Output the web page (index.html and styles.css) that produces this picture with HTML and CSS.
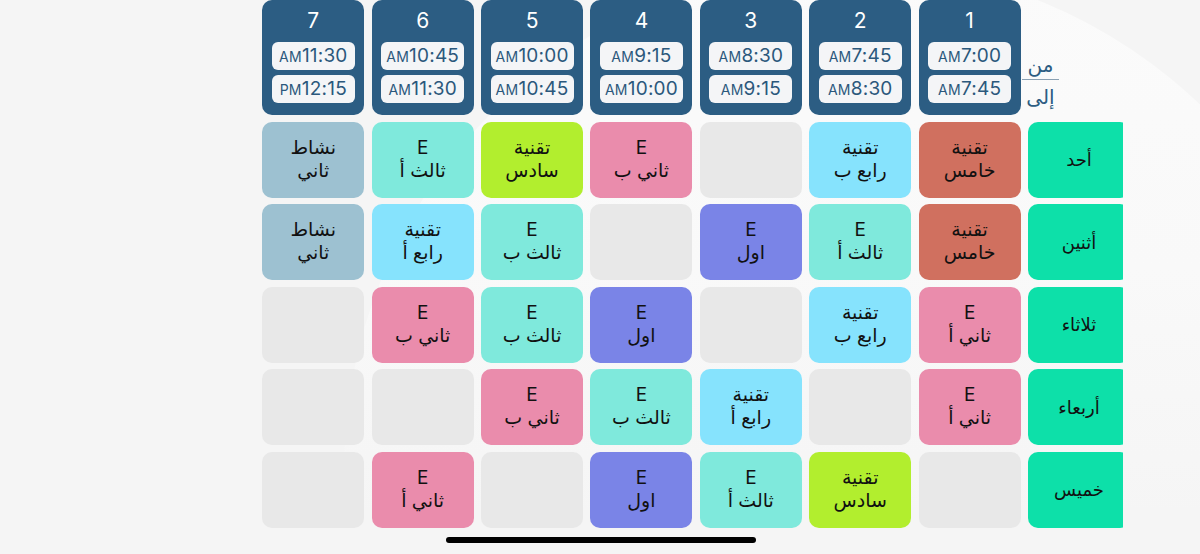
FILE: index.html
```html
<!DOCTYPE html>
<html lang="ar">
<head>
<meta charset="utf-8">
<title>الجدول</title>
<link rel="stylesheet" href="styles.css">
</head>
<body>
<div class="screen">
  <div class="bg-arc"></div>
  <div class="board">
    <div class="grid">
      <div class="corner">
        <div class="corner-inner">
          <span class="corner-from">من</span>
          <span class="corner-line"></span>
          <span class="corner-to">إلى</span>
        </div>
      </div>
      <div class="period"><div class="num">1</div><div class="pill"><span class="ap">AM</span>7:00</div><div class="pill"><span class="ap">AM</span>7:45</div></div>
      <div class="period"><div class="num">2</div><div class="pill"><span class="ap">AM</span>7:45</div><div class="pill"><span class="ap">AM</span>8:30</div></div>
      <div class="period"><div class="num">3</div><div class="pill"><span class="ap">AM</span>8:30</div><div class="pill"><span class="ap">AM</span>9:15</div></div>
      <div class="period"><div class="num">4</div><div class="pill"><span class="ap">AM</span>9:15</div><div class="pill"><span class="ap">AM</span>10:00</div></div>
      <div class="period"><div class="num">5</div><div class="pill"><span class="ap">AM</span>10:00</div><div class="pill"><span class="ap">AM</span>10:45</div></div>
      <div class="period"><div class="num">6</div><div class="pill"><span class="ap">AM</span>10:45</div><div class="pill"><span class="ap">AM</span>11:30</div></div>
      <div class="period"><div class="num">7</div><div class="pill"><span class="ap">AM</span>11:30</div><div class="pill"><span class="ap">PM</span>12:15</div></div>

      <div class="day">أحد</div>
      <div class="cell red"><span>تقنية</span><span>خامس</span></div>
      <div class="cell sky"><span>تقنية</span><span>رابع ب</span></div>
      <div class="cell empty"></div>
      <div class="cell pink"><span>E</span><span>ثاني ب</span></div>
      <div class="cell lime"><span>تقنية</span><span>سادس</span></div>
      <div class="cell teal"><span>E</span><span>ثالث أ</span></div>
      <div class="cell slate"><span>نشاط</span><span>ثاني</span></div>

      <div class="day">أثنين</div>
      <div class="cell red"><span>تقنية</span><span>خامس</span></div>
      <div class="cell teal"><span>E</span><span>ثالث أ</span></div>
      <div class="cell violet"><span>E</span><span>اول</span></div>
      <div class="cell empty"></div>
      <div class="cell teal"><span>E</span><span>ثالث ب</span></div>
      <div class="cell sky"><span>تقنية</span><span>رابع أ</span></div>
      <div class="cell slate"><span>نشاط</span><span>ثاني</span></div>

      <div class="day">ثلاثاء</div>
      <div class="cell pink"><span>E</span><span>ثاني أ</span></div>
      <div class="cell sky"><span>تقنية</span><span>رابع ب</span></div>
      <div class="cell empty"></div>
      <div class="cell violet"><span>E</span><span>اول</span></div>
      <div class="cell teal"><span>E</span><span>ثالث ب</span></div>
      <div class="cell pink"><span>E</span><span>ثاني ب</span></div>
      <div class="cell empty"></div>

      <div class="day">أربعاء</div>
      <div class="cell pink"><span>E</span><span>ثاني أ</span></div>
      <div class="cell empty"></div>
      <div class="cell sky"><span>تقنية</span><span>رابع أ</span></div>
      <div class="cell teal"><span>E</span><span>ثالث ب</span></div>
      <div class="cell pink"><span>E</span><span>ثاني ب</span></div>
      <div class="cell empty"></div>
      <div class="cell empty"></div>

      <div class="day">خميس</div>
      <div class="cell empty"></div>
      <div class="cell lime"><span>تقنية</span><span>سادس</span></div>
      <div class="cell teal"><span>E</span><span>ثالث أ</span></div>
      <div class="cell violet"><span>E</span><span>اول</span></div>
      <div class="cell empty"></div>
      <div class="cell pink"><span>E</span><span>ثاني أ</span></div>
      <div class="cell empty"></div>
    </div>
  </div>
  <div class="home-bar"></div>
</div>
</body>
</html>
```

FILE: styles.css
```css
* { box-sizing: border-box; }

html, body {
  margin: 0;
  padding: 0;
  background: #f6f6f6;
}

body {
  font-family: "Inter", "DejaVu Sans", sans-serif;
  color: #111;
}

.screen {
  position: relative;
  width: 1200px;
  height: 554px;
  overflow: hidden;
  background: #f5f5f5;
}

.bg-arc {
  position: absolute;
  left: 344px;
  top: -36px;
  width: 1012px;
  height: 1012px;
  border-radius: 50%;
  background: linear-gradient(to bottom, #fbfbfb 0%, #f9f9f9 30%, rgba(245,245,245,0) 55%);
}

.board {
  position: relative;
  margin-left: 262px;
  width: 861px;
  overflow: hidden;
  direction: ltr;
}

.grid {
  direction: rtl;
  width: 868px;
  display: grid;
  grid-template-columns: repeat(8, 102px);
  grid-template-rows: 115px repeat(5, 76px);
  column-gap: 7.4px;
  row-gap: 6.5px;
}

.corner {
  direction: ltr;
  display: flex;
  justify-content: flex-start;
  padding-top: 52px;
}

.corner-inner {
  margin-left: -6px;
  width: 37px;
  display: flex;
  flex-direction: column;
  align-items: center;
  color: #2d5d82;
  font-family: "DejaVu Sans", sans-serif;
  font-size: 20px;
}

.corner-from { line-height: 27px; flex-shrink: 0; }
.corner-line {
  display: block;
  flex-shrink: 0;
  width: 37px;
  height: 1px;
  background: #8aa0b2;
}
.corner-to { line-height: 34px; flex-shrink: 0; }

.period {
  background: #2c5d83;
  border-radius: 10px;
  display: flex;
  flex-direction: column;
  align-items: center;
  direction: ltr;
}

.num {
  color: #fff;
  font-size: 21px;
  line-height: 21px;
  margin-top: 10px;
  height: 32px;
}

.pill {
  width: 83px;
  height: 28px;
  margin-bottom: 5px;
  background: #f4f5f7;
  border-radius: 6px;
  color: #2b587c;
  font-size: 19px;
  line-height: 28px;
  text-align: center;
  letter-spacing: 0.2px;
}

.ap {
  font-size: 14px;
  letter-spacing: 0.3px;
}

.day {
  background: #0de0a9;
  border-radius: 10px;
  display: flex;
  align-items: center;
  justify-content: center;
  font-size: 18px;
  font-family: "DejaVu Sans", sans-serif;
  color: #111;
}

.cell {
  border-radius: 10px;
  display: flex;
  flex-direction: column;
  align-items: center;
  justify-content: center;
  font-size: 19px;
  line-height: 23px;
  color: #111;
  padding-bottom: 2px;
}

.red    { background: #d0705f; }
.sky    { background: #86e3fd; }
.teal   { background: #7fe9dc; }
.lime   { background: #b2ee2e; }
.pink   { background: #ea8cac; }
.violet { background: #7a84e7; }
.slate  { background: #9dc1d1; }
.empty  { background: #e8e8e8; }

.home-bar {
  position: absolute;
  left: 446px;
  top: 537px;
  width: 310px;
  height: 6px;
  border-radius: 3px;
  background: #000;
}
```
